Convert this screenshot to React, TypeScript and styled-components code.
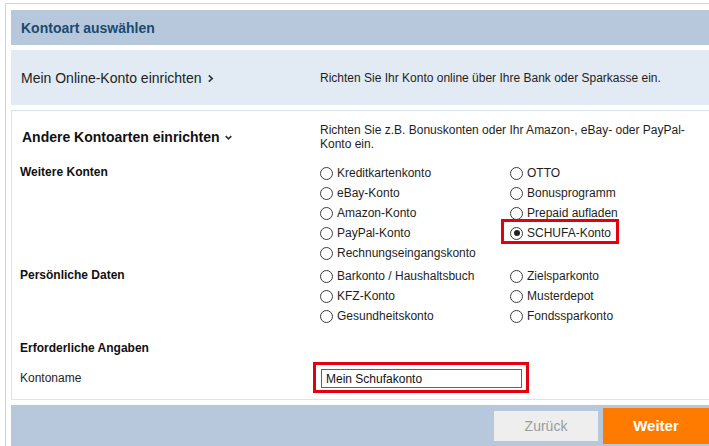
import styled, { createGlobalStyle } from "styled-components"

const GlobalStyle = createGlobalStyle`
    html, body {
        margin: 0;
        padding: 0;
        background: #ffffff;
        overflow: hidden;
    }
    body {
        font-family: "Liberation Sans", Arial, sans-serif;
        font-size: 12px;
        color: #1e1e1e;
    }
`

type Option = { label: string; checked?: boolean; marked?: boolean }

const weitereKonten: Option[][] = [
    [{ label: "Kreditkartenkonto" }, { label: "OTTO" }],
    [{ label: "eBay-Konto" }, { label: "Bonusprogramm" }],
    [{ label: "Amazon-Konto" }, { label: "Prepaid aufladen" }],
    [{ label: "PayPal-Konto" }, { label: "SCHUFA-Konto", checked: true, marked: true }],
    [{ label: "Rechnungseingangskonto" }],
]

const persoenlicheDaten: Option[][] = [
    [{ label: "Barkonto / Haushaltsbuch" }, { label: "Zielsparkonto" }],
    [{ label: "KFZ-Konto" }, { label: "Musterdepot" }],
    [{ label: "Gesundheitskonto" }, { label: "Fondssparkonto" }],
]

const RadioGroup = ({ title, rows }: { title: string; rows: Option[][] }) => (
    <GroupRow>
        <GroupTitle>{title}</GroupTitle>
        <RadioGrid>
            {rows.map((row, i) =>
                [0, 1].map((c) => {
                    const opt = row[c]
                    if (!opt) return <span key={`${i}-${c}`} />
                    return (
                        <RadioLabel key={`${i}-${c}`} $marked={opt.marked}>
                            <RadioCircle $checked={opt.checked} />
                            {opt.label}
                        </RadioLabel>
                    )
                })
            )}
        </RadioGrid>
    </GroupRow>
)

export default function App() {
    return (
        <>
            <GlobalStyle />
            <Frame>
                <Header>Kontoart auswählen</Header>
                <OnlineRow>
                    <RowTitle>
                        Mein Online-Konto einrichten
                        <Chevron viewBox="0 0 8 8">
                            <path d="M2.5 1.2 L5.5 4 L2.5 6.8" />
                        </Chevron>
                    </RowTitle>
                    <RowText>Richten Sie Ihr Konto online über Ihre Bank oder Sparkasse ein.</RowText>
                </OnlineRow>
                <Section>
                    <SectionHead>
                        <RowTitle $bold>
                            Andere Kontoarten einrichten
                            <Chevron viewBox="0 0 8 8">
                                <path d="M1.5 2.8 L4 5.2 L6.5 2.8" />
                            </Chevron>
                        </RowTitle>
                        <RowText>Richten Sie z.B. Bonuskonten oder Ihr Amazon-, eBay- oder PayPal-Konto ein.</RowText>
                    </SectionHead>
                    <RadioGroup title="Weitere Konten" rows={weitereKonten} />
                    <RadioGroup title="Persönliche Daten" rows={persoenlicheDaten} />
                    <SubTitle>Erforderliche Angaben</SubTitle>
                    <FieldRow>
                        <FieldLabel>Kontoname</FieldLabel>
                        <Marked>
                            <TextInput defaultValue="Mein Schufakonto" />
                        </Marked>
                    </FieldRow>
                </Section>
                <Footer>
                    <Button>Zurück</Button>
                    <Button $primary>Weiter</Button>
                </Footer>
            </Frame>
        </>
    )
}

const Frame = styled.div`
    margin: 3px 0 0 5px;
    border-top: 1px solid #ccd6e1;
    border-left: 1px solid #ccd6e1;
    padding: 6px 0 0 5px;
    display: flex;
    flex-direction: column;
    gap: 5px;
    width: 720px;
`
const Header = styled.div`
    height: 35px;
    background: #b7c8dc;
    padding-left: 10px;
    display: flex;
    align-items: center;
    font-size: 14px;
    font-weight: bold;
    color: #1b4a72;
`
const OnlineRow = styled.div`
    height: 55px;
    background: #e2eaf3;
    display: grid;
    grid-template-columns: 309px 380px;
    align-items: center;
`
const RowTitle = styled.div<{ $bold?: boolean }>`
    padding-left: 10px;
    font-size: 14px;
    font-weight: ${(p) => (p.$bold ? "bold" : "normal")};
    color: ${(p) => (p.$bold ? "#111" : "#222")};
    display: flex;
    align-items: center;
    gap: 4px;
`
const Chevron = styled.svg`
    width: 9px;
    height: 9px;
    fill: none;
    stroke: #333;
    stroke-width: 1.5;
    margin-top: 1px;
`
const RowText = styled.div`
    font-size: 12px;
    line-height: 14px;
    color: #1e1e1e;
    padding-right: 12px;
`
const Section = styled.div`
    border: 1px solid #dde4ec;
    background: #ffffff;
    padding: 12px 0 6px 0;
`
const SectionHead = styled.div`
    display: grid;
    grid-template-columns: 308px 380px;
    align-items: center;
    margin-bottom: 12px;
`
const GroupRow = styled.div`
    display: grid;
    grid-template-columns: 308px 380px;
    margin-bottom: 3px;
`
const GroupTitle = styled.div`
    padding-left: 8px;
    font-weight: bold;
    line-height: 18px;
    color: #111;
`
const RadioGrid = styled.div`
    display: grid;
    grid-template-columns: 190px 190px;
    grid-auto-rows: 20px;
    align-items: center;
    justify-items: start;
`
const RadioLabel = styled.label<{ $marked?: boolean }>`
    position: relative;
    display: inline-flex;
    align-items: center;
    gap: 4px;
    height: 20px;
    color: #1e1e1e;

    ${(p) =>
        p.$marked &&
        `
        &::after {
            content: "";
            position: absolute;
            left: -9px;
            right: -8px;
            top: -4px;
            bottom: -1px;
            border: 3px solid #e3000f;
        }
    `}
`
const RadioCircle = styled.span<{ $checked?: boolean }>`
    width: 11px;
    height: 11px;
    border: 1px solid #3c3c3c;
    border-radius: 50%;
    background: #ffffff;
    display: inline-flex;
    align-items: center;
    justify-content: center;
    box-sizing: content-box;

    &::before {
        content: "";
        width: 6px;
        height: 6px;
        border-radius: 50%;
        background: ${(p) => (p.$checked ? "#222" : "transparent")};
    }
`
const SubTitle = styled.div`
    padding: 10px 0 0 8px;
    font-weight: bold;
    line-height: 18px;
    color: #111;
`
const FieldRow = styled.div`
    display: grid;
    grid-template-columns: 301px 240px;
    align-items: center;
    margin-top: 5px;
`
const FieldLabel = styled.div`
    padding-left: 8px;
    color: #1e1e1e;
`
const Marked = styled.div`
    width: fit-content;
    border: 3px solid #e3000f;
    padding: 4px 4px 2px 5px;
`
const TextInput = styled.input`
    display: block;
    box-sizing: border-box;
    width: 201px;
    height: 19px;
    border: 1px solid #1f74b8;
    padding: 0 4px;
    font-family: "Liberation Sans", Arial, sans-serif;
    font-size: 12px;
    color: #111;
    outline: none;
`
const Footer = styled.div`
    height: 41px;
    background: #b7c8dc;
    display: flex;
    justify-content: flex-end;
    align-items: center;
    gap: 5px;
    padding-right: 22px;
`
const Button = styled.button<{ $primary?: boolean }>`
    border: none;
    font-family: "Liberation Sans", Arial, sans-serif;
    width: ${(p) => (p.$primary ? "106px" : "104px")};
    height: ${(p) => (p.$primary ? "36px" : "30px")};
    background: ${(p) => (p.$primary ? "#ff7b00" : "#eeeeee")};
    color: ${(p) => (p.$primary ? "#ffffff" : "#9b9b9b")};
    font-size: ${(p) => (p.$primary ? "15px" : "14px")};
    font-weight: ${(p) => (p.$primary ? "bold" : "normal")};
`
